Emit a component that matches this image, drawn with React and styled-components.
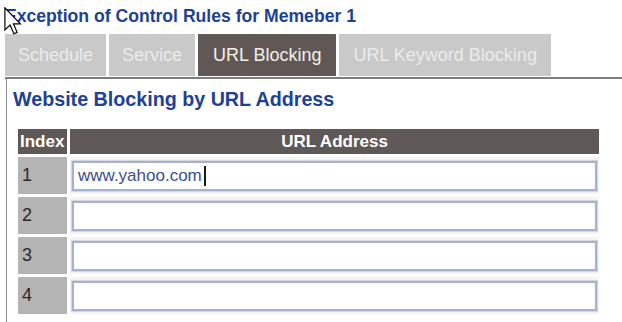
import React from 'react';
import styled, { createGlobalStyle } from 'styled-components';

const GlobalStyle = createGlobalStyle`
body {
  margin: 0;
  background: #ffffff;
  font-family: "Liberation Sans", Arial, sans-serif;
}
`

const Page = styled.div`
position: relative;
width: 622px;
height: 322px;
overflow: hidden;
padding-left: 5px;
box-sizing: border-box;
`

const Title = styled.div`
margin-top: 6px;
font-size: 17.6px;
line-height: 20px;
font-weight: bold;
color: #1d4194;
`

const TabBar = styled.div`
display: flex;
gap: 3px;
margin-top: 8px;
padding-bottom: 1px;
border-bottom: 2px solid #7d7d7d;
`

const Tab = styled.div`
height: 42px;
display: flex;
align-items: center;
padding: 0 ${(props) => props.pad || 13}px;
font-size: 18px;
background: ${(props) => props.active ? "#5f5855" : "#c9c9c9"};
color: ${(props) => props.active ? "#f3f0ea" : "#ebebeb"};
`

const Panel = styled.div`
margin-left: 1px;
border-left: 1px solid #8c8c8c;
padding: 9px 0 0 6px;
height: 260px;
`

const Heading = styled.div`
font-size: 19.7px;
line-height: 22px;
font-weight: bold;
color: #1d4194;
`

const Table = styled.div`
display: grid;
grid-template-columns: 49px 529px;
grid-auto-rows: 37px;
grid-template-rows: 25px;
gap: 3px;
margin: 19px 0 0 5px;
`

const HeadCell = styled.div`
background: #5e5957;
color: #ffffff;
font-weight: bold;
font-size: 17px;
display: flex;
align-items: center;
justify-content: ${(props) => props.center ? "center" : "flex-start"};
padding-left: ${(props) => props.center ? "0" : "2px"};
`

const IndexCell = styled.div`
background: #b4b4b4;
color: #2a2a2a;
font-size: 18px;
display: flex;
align-items: center;
padding-left: 4px;
`

const UrlCell = styled.div`
background: #f4f4f2;
padding: 4px 2px 3px 2px;
box-sizing: border-box;
`

const Field = styled.div`
height: 30px;
box-sizing: border-box;
background: #ffffff;
border: 2px solid #a2b2cf;
box-shadow: 0 0 0 1px #d8d8d8;
display: flex;
align-items: center;
padding-left: 4px;
font-size: 17px;
color: #3b4f8e;
`

const Caret = styled.span`
display: inline-block;
width: 2px;
height: 20px;
margin-left: 2px;
background: #1a1a1a;
`

const Cursor = styled.svg`
position: absolute;
left: 4px;
top: 7px;
`

const tabs = [
  { label: "Schedule", pad: 13 },
  { label: "Service", pad: 13 },
  { label: "URL Blocking", pad: 15, active: true },
  { label: "URL Keyword Blocking", pad: 14 },
]

const rows = [
  { index: 1, url: "www.yahoo.com", focused: true },
  { index: 2, url: "" },
  { index: 3, url: "" },
  { index: 4, url: "" },
]

const App = () => {
  return (
    <Page>
      <GlobalStyle />
      <Title>Exception of Control Rules for Memeber 1</Title>
      <TabBar>
        {tabs.map((tab) => (
          <Tab key={tab.label} pad={tab.pad} active={tab.active}>{tab.label}</Tab>
        ))}
      </TabBar>
      <Panel>
        <Heading>Website Blocking by URL Address</Heading>
        <Table>
          <HeadCell>Index</HeadCell>
          <HeadCell center>URL Address</HeadCell>
          {rows.map((row) => (
            <React.Fragment key={row.index}>
              <IndexCell>{row.index}</IndexCell>
              <UrlCell>
                <Field>
                  {row.url}
                  {row.focused ? <Caret /> : null}
                </Field>
              </UrlCell>
            </React.Fragment>
          ))}
        </Table>
      </Panel>
      <Cursor width="18" height="28" viewBox="0 0 12 19">
        <path d="M0.5 0.5 L0.5 15.5 L4 12.2 L6.6 18.2 L8.8 17.2 L6.3 11.4 L11 11.4 Z" fill="#ffffff" stroke="#000000" strokeWidth="0.8" strokeLinejoin="miter" />
      </Cursor>
    </Page>
  )
}

export default App
